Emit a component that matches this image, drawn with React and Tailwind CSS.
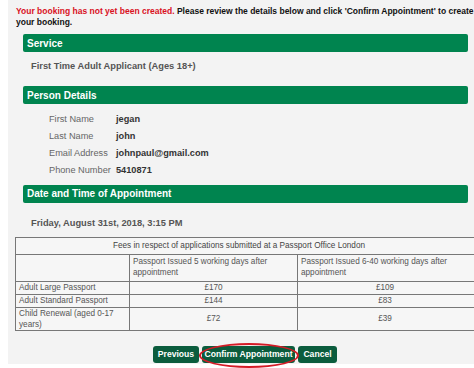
import React from "react";

const SectionBar = ({ title }) => (
    <div className="ml-[15px] w-[445px] h-[18px] bg-[#00844f] rounded-[2px] flex items-center pl-[4px] text-white font-bold text-[10px]">
        {title}
    </div>
);

const people = [
    ["First Name", "jegan"],
    ["Last Name", "john"],
    ["Email Address", "johnpaul@gmail.com"],
    ["Phone Number", "5410871"],
];

const fees = [
    ["Adult Large Passport", "£170", "£109"],
    ["Adult Standard Passport", "£144", "£83"],
    ["Child Renewal (aged 0-17 years)", "£72", "£39"],
];

const App = () => {
    return (
        <div
            className="relative w-[474px] h-[368px] overflow-hidden bg-white"
            style={{ fontFamily: '"Liberation Sans", Arial, sans-serif' }}
        >
            <div className="ml-[8px] w-[480px] h-[364px] bg-[#f3f3f3] flex flex-col">
                {/* warning text */}
                <p className="pl-[8px] pt-[6px] text-[8.5px] leading-[11px] font-bold text-[#111] whitespace-nowrap">
                    <span className="text-[#d9111f]">Your booking has not yet been created.</span>{" "}
                    Please review the details below and click 'Confirm Appointment' to create
                    <br />
                    your booking.
                </p>

                <div className="mt-[6px]">
                    <SectionBar title="Service" />
                </div>
                <p className="ml-[23px] mt-[9px] text-[9.3px] leading-[11px] font-bold text-[#555]">
                    First Time Adult Applicant (Ages 18+)
                </p>

                <div className="mt-[14px]">
                    <SectionBar title="Person Details" />
                </div>
                <div className="ml-[41px] mt-[8px] flex flex-col">
                    {people.map(([label, value]) => (
                        <div key={label} className="flex h-[16.7px] items-center text-[9.2px]">
                            <span className="w-[67px] text-[#666]">{label}</span>
                            <span className="font-bold text-[#333]">{value}</span>
                        </div>
                    ))}
                </div>

                <div className="mt-[6px]">
                    <SectionBar title="Date and Time of Appointment" />
                </div>
                <p className="ml-[23px] mt-[15px] text-[9.3px] leading-[11px] font-bold text-[#555]">
                    Friday, August 31st, 2018, 3:15 PM
                </p>

                {/* fees table */}
                <table className="ml-[7px] mt-[8px] w-[470px] border-collapse text-[8.2px] leading-[11px] text-[#555] bg-[#f6f6f6]">
                    <tbody>
                        <tr className="h-[17px]">
                            <td colSpan={3} className="border border-[#777] text-center text-[#444] pr-[22px]">
                                Fees in respect of applications submitted at a Passport Office London
                            </td>
                        </tr>
                        <tr className="h-[27px]">
                            <td className="w-[114px] border border-[#777]"></td>
                            <td className="w-[168px] border border-[#777] px-[3px] align-top pt-[1px]">
                                Passport Issued 5 working days after appointment
                            </td>
                            <td className="border border-[#777] px-[3px] pr-[30px] align-top pt-[1px]">
                                Passport Issued 6-40 working days after appointment
                            </td>
                        </tr>
                        {fees.map(([name, a, b]) => (
                            <tr key={name} className="h-[13px]">
                                <td className="border border-[#777] px-[3px]">{name}</td>
                                <td className="border border-[#777] text-center">{a}</td>
                                <td className="border border-[#777] text-center pr-[12px]">{b}</td>
                            </tr>
                        ))}
                    </tbody>
                </table>

                {/* actions */}
                <div className="ml-[145px] mt-[15px] flex gap-[3px] text-white font-bold text-[8.6px]">
                    <button className="w-[46px] h-[17px] rounded-[3px] bg-[#0b5c3d]">Previous</button>
                    <button className="w-[93px] h-[17px] rounded-[3px] bg-[#0b5c3d]">Confirm Appointment</button>
                    <button className="w-[39px] h-[17px] rounded-[3px] bg-[#0b5c3d]">Cancel</button>
                </div>
            </div>

            {/* red annotation ring */}
            <div className="absolute left-[199px] top-[343px] w-[100px] h-[25px] rounded-[50%] border-[2px] border-[#d41b26]" />
        </div>
    );
};

export default App;
